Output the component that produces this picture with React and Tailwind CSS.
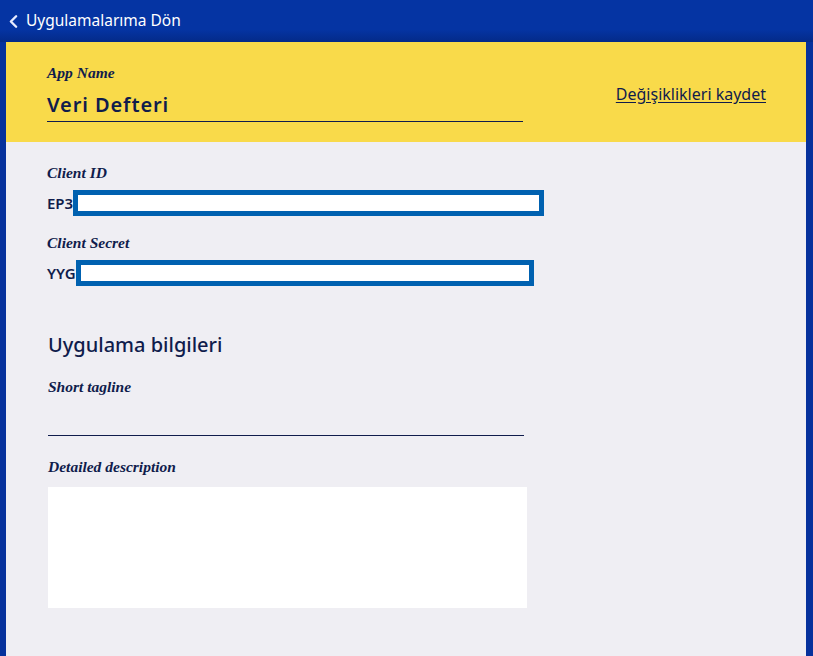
import { ChevronLeft } from 'lucide-react';

const sans = { fontFamily: '"Noto Sans", "Open Sans", sans-serif' };

function Label({ children, className = '' }) {
  return (
    <div
      className={`text-[15.5px] leading-[18px] italic font-bold text-[#101c4c] ${className}`}
      style={{ fontFamily: '"Liberation Serif", serif' }}
    >
      {children}
    </div>
  );
}

function MaskedField({ prefix, width }) {
  return (
    <div className="flex items-center">
      <span className="text-[15px] font-semibold text-[#101c4c]">{prefix}</span>
      <div className={`h-[26px] ${width} border-[5px] border-[#0061b0] bg-white`} />
    </div>
  );
}

export default function App() {
  return (
    <div className="min-h-[656px] bg-[#06319c]" style={sans}>
      {/* top bar */}
      <div className="h-[42px] flex items-center pl-[3px] bg-gradient-to-b from-[#0534a3] from-70% to-[#042a88]">
        <ChevronLeft className="h-[21px] w-[21px] text-[#e8ecff]" strokeWidth={2.75} />
        <span className="ml-[2px] text-[15.5px] text-white">Uygulamalarıma Dön</span>
      </div>

      <div className="ml-[6px] mr-[7px] min-h-[614px] bg-[#efeef3]">
        {/* yellow header */}
        <div className="h-[100px] bg-[#f9da4a] flex items-start justify-between pl-[41px] pr-[40px]">
          <div className="pt-[22px] w-[476px]">
            <Label>App Name</Label>
            <div className="mt-[10px] pb-[3px] border-b border-[#101c4c] text-[20px] leading-[26px] font-semibold tracking-[0.9px] text-[#101c4c]">
              Veri Defteri
            </div>
          </div>
          <a href="#" className="mt-[40px] text-[16px] text-[#101c4c] underline underline-offset-2">
            Değişiklikleri kaydet
          </a>
        </div>

        {/* credentials */}
        <div className="pl-[41px] pt-[22px]">
          <Label>Client ID</Label>
          <div className="mt-[8px]">
            <MaskedField prefix="EP3" width="w-[471px]" />
          </div>
          <Label className="mt-[18px]">Client Secret</Label>
          <div className="mt-[8px]">
            <MaskedField prefix="YYG" width="w-[458px]" />
          </div>
        </div>

        {/* app info */}
        <div className="pl-[42px] pt-[46px] pb-[48px]">
          <h2 className="text-[20px] leading-[26px] font-medium text-[#101c4c]">Uygulama bilgileri</h2>
          <Label className="mt-[20px]">Short tagline</Label>
          <div className="mt-[39px] w-[476px] border-b border-[#101c4c]" />
          <Label className="mt-[22px]">Detailed description</Label>
          <div className="mt-[11px] w-[479px] h-[121px] bg-white" />
        </div>
      </div>
    </div>
  );
}
